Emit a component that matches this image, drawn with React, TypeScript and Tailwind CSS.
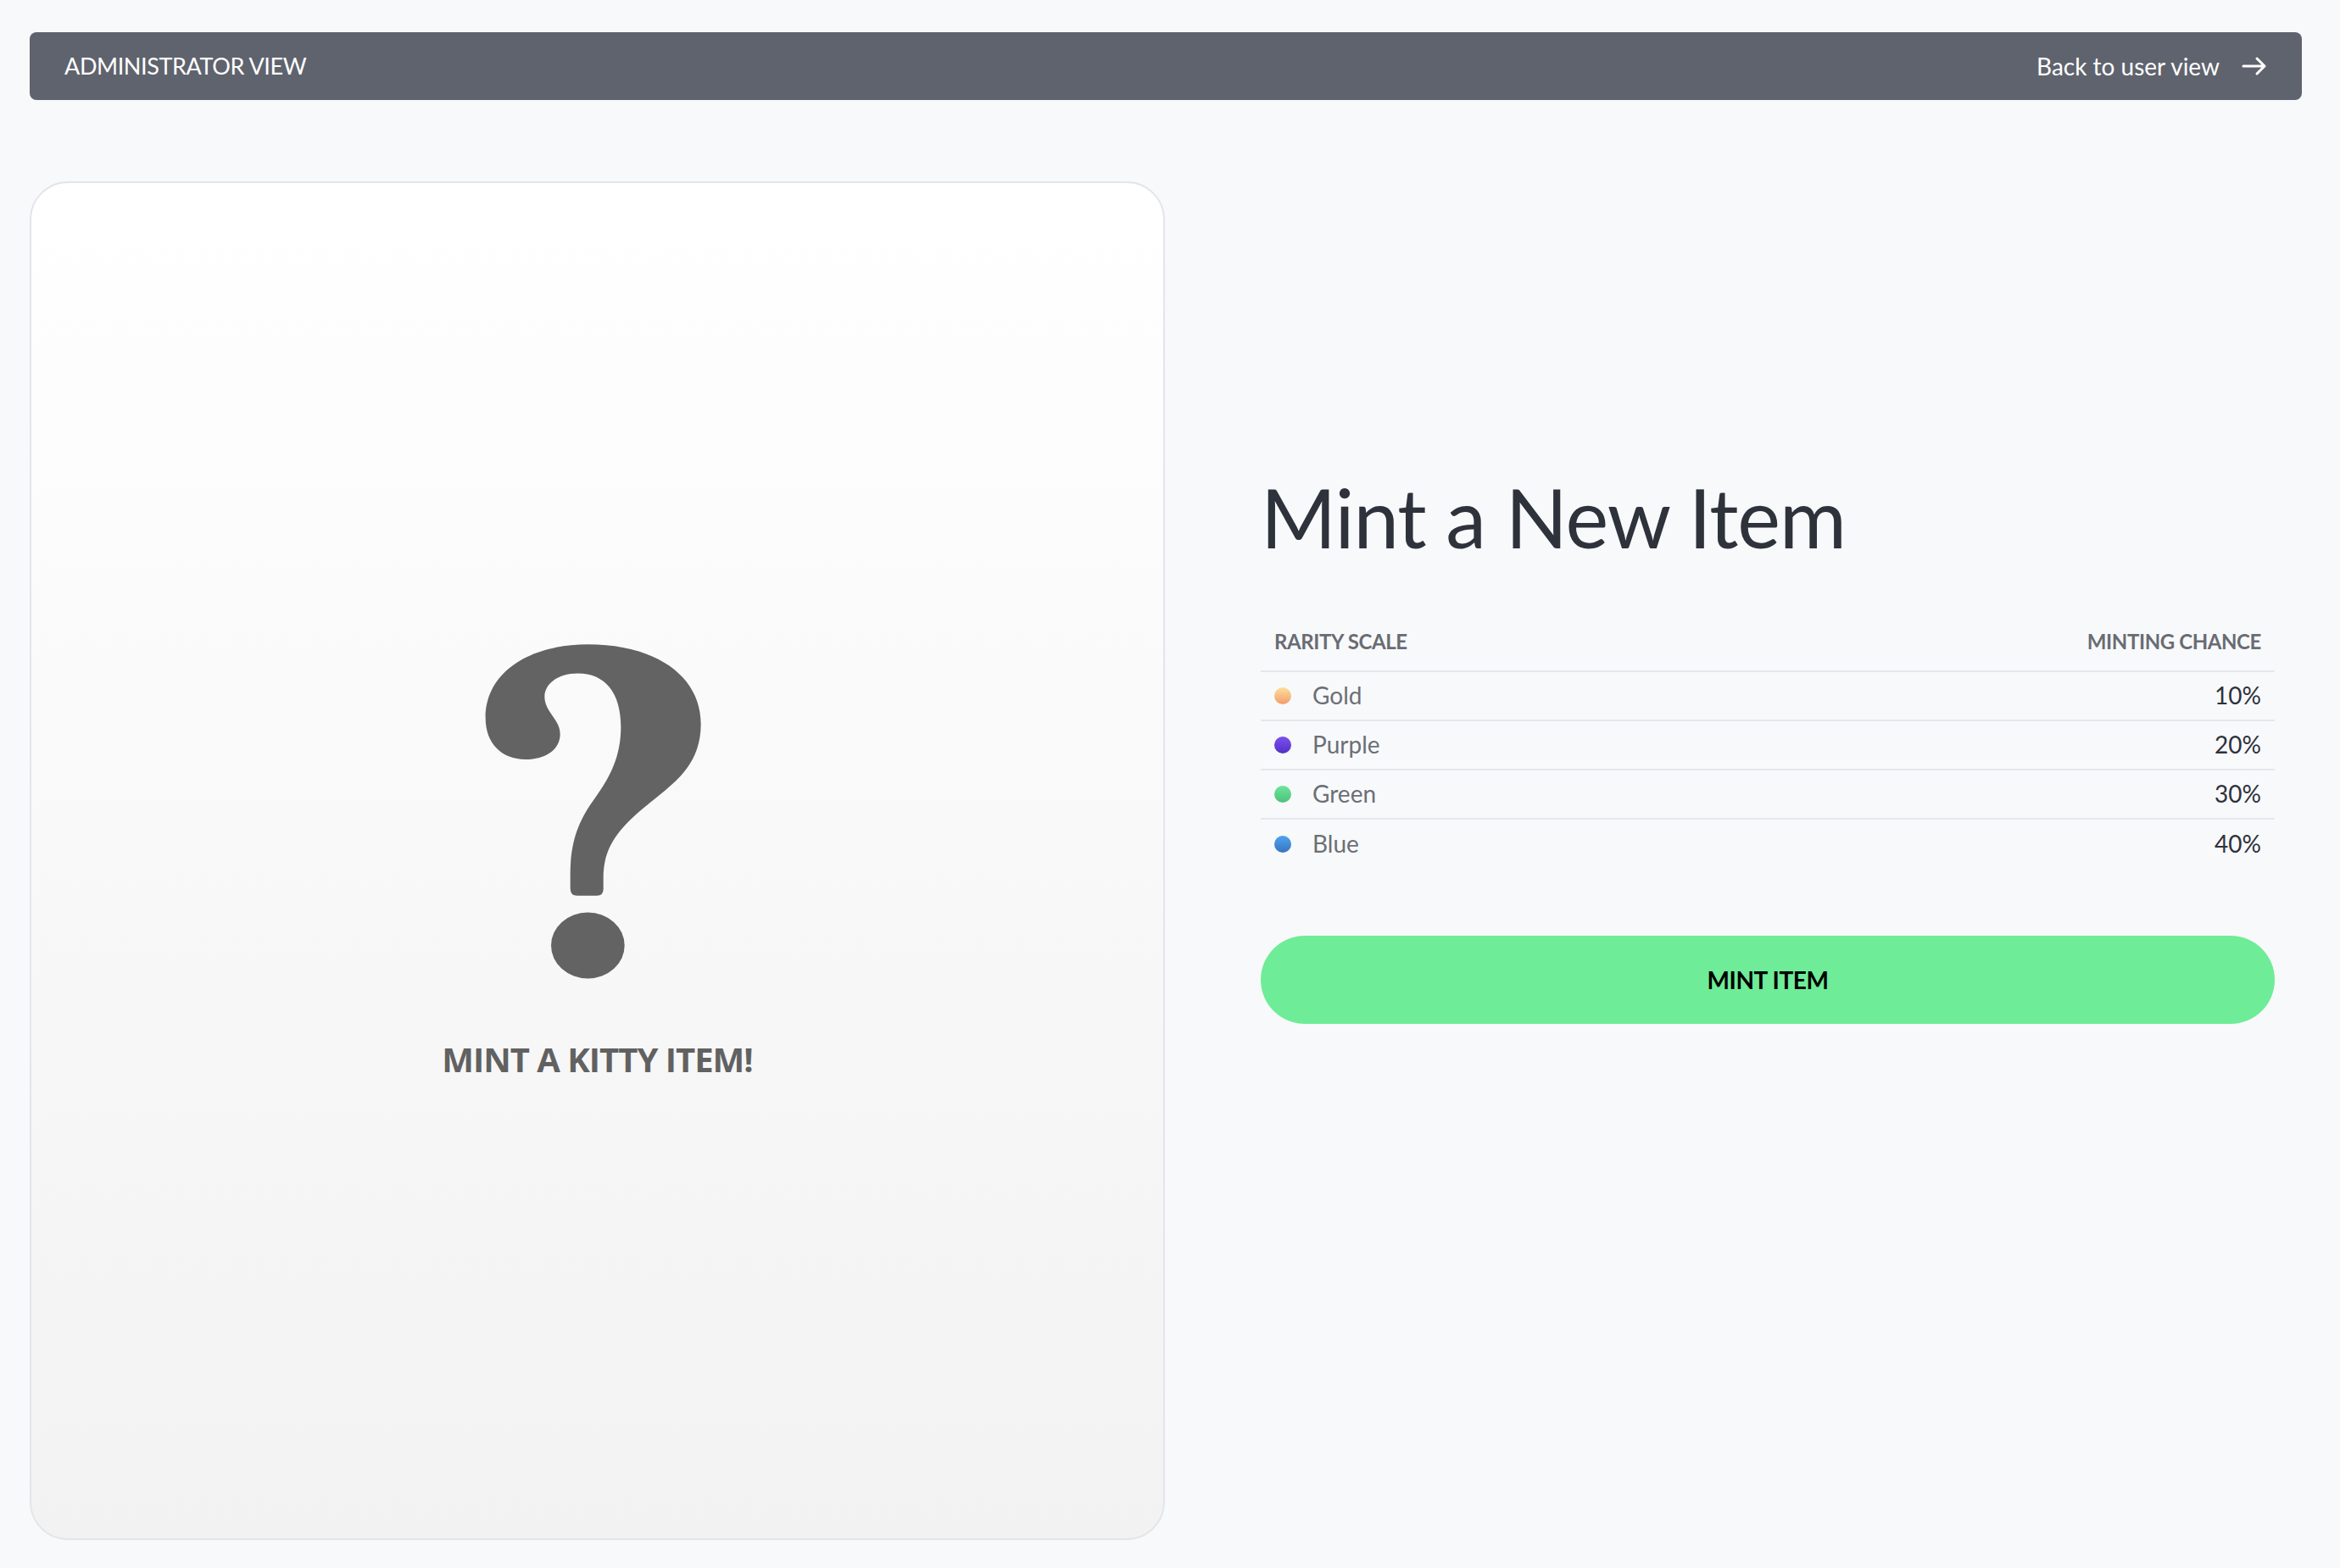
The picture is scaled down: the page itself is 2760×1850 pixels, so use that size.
import React from 'react';

const rarities = [
  { name: 'Gold', chance: '10%', dot: 'bg-gradient-to-b from-[#fbdf9c] to-[#f39c6c]' },
  { name: 'Purple', chance: '20%', dot: 'bg-gradient-to-b from-[#7c4ff2] to-[#5530c6]' },
  { name: 'Green', chance: '30%', dot: 'bg-gradient-to-b from-[#6fe49a] to-[#4cc27a]' },
  { name: 'Blue', chance: '40%', dot: 'bg-gradient-to-b from-[#4ea4f0] to-[#3874be]' },
];

const QuestionMark = () => (
  <svg width="260" height="402" viewBox="270 100 780 1125" preserveAspectRatio="none" className="mr-[9px]">
    <path
      fill="#636363"
      d="M640 112 C880 112 1040 215 1040 375 C1040 500 960 560 880 620 C780 695 695 760 695 880 L695 920 Q695 942 672 942 L602 942 Q578 942 578 918 L578 870 C578 760 610 690 665 620 C720 550 757 480 757 385 C757 270 700 208 605 208 C530 208 487 245 487 285 C487 335 542 360 542 408 C542 460 490 492 420 492 C335 492 278 440 278 355 C278 200 440 112 640 112 Z"
    />
    <ellipse cx="640" cy="1106" rx="130" ry="109" fill="#636363" />
  </svg>
);

export default function App() {
  return (
    <div className="min-h-screen bg-[#f8f9fb] pl-[35px] pr-[45px] pt-[38px] font-['Lato','Noto_Sans',sans-serif]">
      <header className="h-[80px] rounded-[8px] bg-[#5f636e] flex items-center justify-between pl-[41px] pr-[41px] text-white">
        <span className="text-[27px] tracking-[-0.4px]">ADMINISTRATOR VIEW</span>
        <button className="flex items-center gap-[26px] text-[28px]">
          <span>Back to user view</span>
          <svg width="30" height="24" viewBox="0 0 30 24" fill="none" stroke="white" strokeWidth="3" strokeLinecap="round" strokeLinejoin="round">
            <path d="M2 12 H27 M18 3 L27 12 L18 21" />
          </svg>
        </button>
      </header>

      <main className="mt-[96px] flex">
        <div className="w-[1339px] h-[1603px] shrink-0 rounded-[45px] border-2 border-[#e4e5ea] bg-gradient-to-b from-white to-[#f2f2f2] flex flex-col items-center pt-[540px]">
          <QuestionMark />
          <p className="mt-[72px] text-[40px] leading-none font-bold tracking-[-1px] text-[#616161] font-['Open_Sans',sans-serif]">
            MINT A KITTY ITEM!
          </p>
        </div>

        <section className="ml-[113px] w-[1196px] pt-[348px]">
          <h1 className="text-[96px] leading-none tracking-[-1px] text-[#2e323b]">Mint a New Item</h1>

          <div className="mt-[87px]">
            <div className="flex justify-between px-[16px] pb-[22px] border-b-2 border-[#e6e7ea] text-[24px] leading-[24px] font-bold tracking-[-0.4px] text-[#696c73]">
              <span>RARITY SCALE</span>
              <span>MINTING CHANCE</span>
            </div>
            {rarities.map((r, i) => (
              <div
                key={r.name}
                className={`flex items-center justify-between h-[58px] px-[16px] ${i < rarities.length - 1 ? 'border-b-2 border-[#e6e7ea]' : ''}`}
              >
                <div className="flex items-center gap-[25px]">
                  <span className={`w-[20px] h-[20px] rounded-full ${r.dot}`} />
                  <span className="text-[28px] leading-none text-[#6c6f75] -mt-[3px]">{r.name}</span>
                </div>
                <span className="text-[28px] leading-none text-[#2e323b] -mt-[3px]">{r.chance}</span>
              </div>
            ))}
          </div>

          <button className="mt-[79px] w-full h-[104px] rounded-full bg-[#6eec97] text-[28px] font-bold tracking-[-0.4px] text-black">
            MINT ITEM
          </button>
        </section>
      </main>
    </div>
  );
}
